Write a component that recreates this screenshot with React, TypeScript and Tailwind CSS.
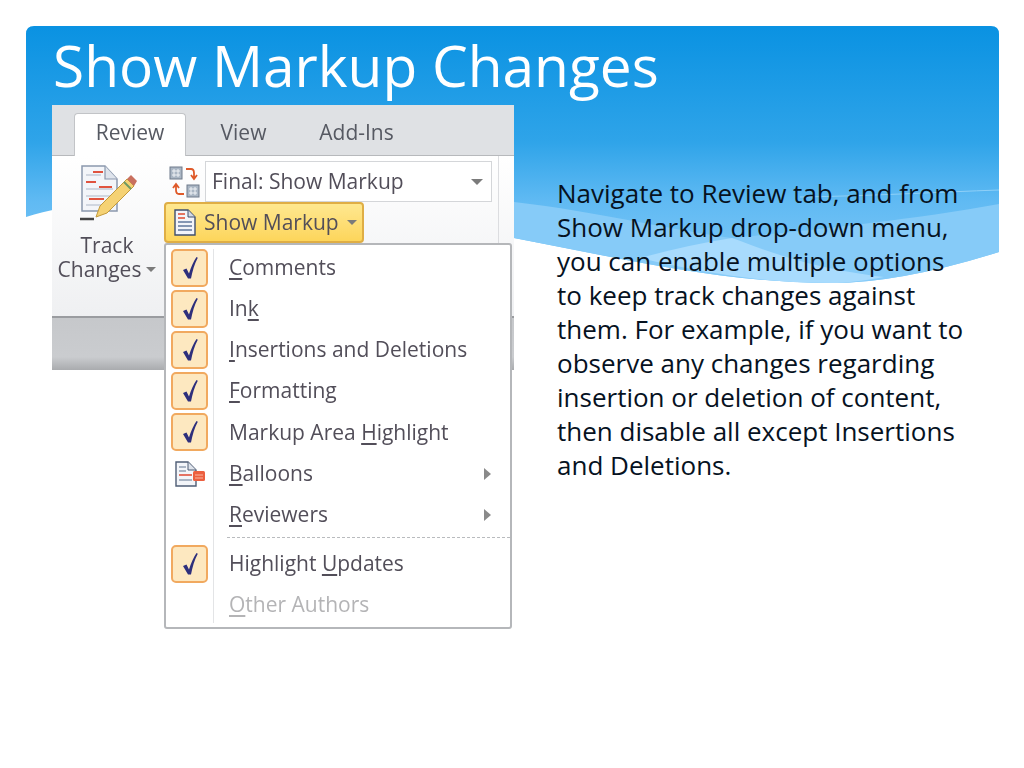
import React from "react";

function Banner() {
  return (
    <svg className="absolute left-0 top-0" width="1024" height="300" viewBox="0 0 1024 300">
      <defs>
        <linearGradient id="bg" x1="0" y1="26" x2="0" y2="284" gradientUnits="userSpaceOnUse">
          <stop offset="0" stopColor="#0a92e2" />
          <stop offset="0.45" stopColor="#2fa4e9" />
          <stop offset="0.68" stopColor="#60baf3" />
          <stop offset="1" stopColor="#84caf8" />
        </linearGradient>
      </defs>
      <path d="M26 217 L26 34 Q26 26 34 26 L991 26 Q999 26 999 34 L999 252 Q900 283 833 283 C720 283 620 258 514 238 C350 205 150 180 26 217 Z" fill="url(#bg)" />
      <path d="M514 202 C600 212 670 230 732 238 C790 232 900 222 999 204 L999 252 Q900 283 833 283 C720 283 620 258 514 238 Z" fill="#86cbf8" />
      <path d="M640 258 C670 250 700 243 732 238 C770 252 810 268 884 277 Q850 283 833 283 C760 283 700 272 640 258 Z" fill="#a8dbfd" />
      <path d="M800 197 C870 196 940 192 999 190" stroke="#8fd0f8" strokeWidth="1" fill="none" />
    </svg>
  );
}

function TrackIcon() {
  return (
    <svg width="60" height="62" viewBox="0 0 60 62">
      <path d="M3 3 H26 L38 16 V48 H3 Z" fill="#f3f5f9" stroke="#8b98ad" strokeWidth="1.5" />
      <path d="M26 3 V16 H38" fill="#dfe4ec" stroke="#8b98ad" strokeWidth="1.2" />
      <path d="M7 12 H22 M7 26 H34 M7 33 H34 M7 42 H30" stroke="#c5ccd8" strokeWidth="1.5" />
      <path d="M14 9 H24 M7 19 H17 M20 24 H33 M10 36 H25" stroke="#e0533f" strokeWidth="2" />
      <path d="M17 54 L21 43 L48 16 L55 23 L28 50 Z" fill="#f5d274" stroke="#c39a3b" strokeWidth="1" />
      <path d="M48 16 L52 12 L58 18 L55 23 Z" fill="#c9705f" />
      <path d="M45 19 L52 26" stroke="#6f9a62" strokeWidth="2" />
      <path d="M1 56 H15" stroke="#444" strokeWidth="2.5" />
    </svg>
  );
}

function CompareIcon() {
  return (
    <svg width="31" height="32" viewBox="0 0 31 32">
      <rect x="1" y="1" width="12" height="12" fill="#aab6c4" stroke="#6f7b8b" />
      <path d="M3 5 H11 M3 9 H11 M5 3 V11 M9 3 V11" stroke="#eef1f5" strokeWidth="1" />
      <rect x="18" y="19" width="12" height="12" fill="#aab6c4" stroke="#6f7b8b" />
      <path d="M20 23 H28 M20 27 H28 M22 21 V29 M26 21 V29" stroke="#eef1f5" strokeWidth="1" />
      <path d="M17 3 H22 Q25 3 25 7 V12 M22 9 L25 13 L28 9" stroke="#df5a2a" strokeWidth="1.8" fill="none" />
      <path d="M15 28 H10 Q7 28 7 24 V19 M4 22 L7 18 L10 22" stroke="#df5a2a" strokeWidth="1.8" fill="none" />
    </svg>
  );
}

function DocIcon() {
  return (
    <svg width="22" height="27" viewBox="0 0 22 27">
      <path d="M1 1 H14 L21 8 V26 H1 Z" fill="#f2f4f9" stroke="#3f4f6e" strokeWidth="1.4" />
      <path d="M14 1 V8 H21" fill="#d3dae6" stroke="#3f4f6e" />
      <path d="M4 5 H11 M4 9 H11" stroke="#e0492f" strokeWidth="1.6" />
      <path d="M4 13 H18 M4 17 H18 M4 21 H18" stroke="#8496b3" strokeWidth="1.8" />
    </svg>
  );
}

function BalloonIcon() {
  return (
    <svg width="32" height="28" viewBox="0 0 32 28">
      <path d="M2 2 H14 L22 10 V26 H2 Z" fill="#f3f5f9" stroke="#4f5d75" strokeWidth="1.4" />
      <path d="M14 2 V10 H22" fill="#dfe4ec" stroke="#4f5d75" />
      <path d="M5 7 H12 M5 11 H12 M5 20 H18" stroke="#93a0b3" strokeWidth="1.6" />
      <path d="M5 15 H18" stroke="#e0533f" strokeWidth="1.6" />
      <rect x="19" y="11" width="12" height="10" rx="1.5" fill="#ec5f3f" />
      <path d="M21 15 H29 M21 18 H29" stroke="#f9b7a3" strokeWidth="1" />
    </svg>
  );
}

function Check() {
  return (
    <div className="flex h-[38px] w-[37px] items-center justify-center rounded-[5px] border-2 border-[#f1a95f] bg-[#fde8c0]">
      <svg width="16" height="24" viewBox="0 0 16 24">
        <path d="M1 14 L4.5 12.5 L7 17.5 C9 11 11.5 5.5 14.5 1 L15.8 1.8 C12.5 8 10.5 15 9 22.5 L6 22.5 Z" fill="#2e2f7c" />
      </svg>
    </div>
  );
}

function Caret({ wide }: { wide?: boolean }) {
  return (
    <span
      className={
        wide
          ? "inline-block h-0 w-0 border-x-[6px] border-t-[6px] border-x-transparent border-t-[#7b7b7b]"
          : "inline-block h-0 w-0 border-x-[5px] border-t-[5px] border-x-transparent border-t-[#7b7b7b]"
      }
    />
  );
}

function Chevron() {
  return <span className="mr-[19px] ml-auto inline-block h-0 w-0 border-y-[6px] border-l-[7px] border-y-transparent border-l-[#8a8a8a]" />;
}

type Item = { before?: string; key?: string; after?: string; mark?: "check" | "balloon"; sub?: boolean; off?: boolean };

const top: Item[] = [
  { key: "C", after: "omments", mark: "check" },
  { before: "In", key: "k", mark: "check" },
  { key: "I", after: "nsertions and Deletions", mark: "check" },
  { key: "F", after: "ormatting", mark: "check" },
  { before: "Markup Area ", key: "H", after: "ighlight", mark: "check" },
  { key: "B", after: "alloons", mark: "balloon", sub: true },
  { key: "R", after: "eviewers", sub: true },
];
const bottom: Item[] = [
  { before: "Highlight ", key: "U", after: "pdates", mark: "check" },
  { key: "O", after: "ther Authors", off: true },
];

function Row({ item }: { item: Item }) {
  return (
    <div className="flex h-[41.2px] items-center">
      <div className="flex w-[49px] shrink-0 items-center justify-center pl-[2px] pr-[4px]">
        {item.mark === "check" && <Check />}
        {item.mark === "balloon" && <BalloonIcon />}
      </div>
      <div className={"pl-[14px] text-[21px] whitespace-pre " + (item.off ? "text-[#b4b4b6]" : "text-[#524e59]")}>
        {item.before}
        <span className="underline underline-offset-[3px]">{item.key}</span>
        {item.after}
      </div>
      {item.sub && <Chevron />}
    </div>
  );
}

function Ribbon() {
  return (
    <div className="relative h-[265px] w-[462px] font-['Open_Sans',sans-serif] blur-[0.5px]">
      <div className="flex h-[51px] items-end border-b border-[#b7b9bc] bg-[#dfe1e4] pl-[22px] text-[21px] text-[#565962]">
        <div className="-mb-px flex h-[43px] w-[112px] items-center justify-center rounded-t-[4px] border border-b-0 border-[#c2c4c7] bg-white pb-[4px]">Review</div>
        <div className="ml-[11px] flex h-[42px] w-[93px] items-center justify-center pb-[3px]">View</div>
        <div className="ml-[19px] flex h-[42px] w-[95px] items-center justify-center pb-[3px]">Add-Ins</div>
      </div>
      <div className="flex h-[160px] bg-gradient-to-b from-white to-[#eff0f2]">
        <div className="flex w-[110px] flex-col items-center pt-[7px] text-[21px] leading-[24px] text-[#524e59]">
          <div className="pl-[3px]"><TrackIcon /></div>
          <div className="mt-[8px]">Track</div>
          <div className="flex items-center gap-[5px] whitespace-nowrap">Changes <Caret /></div>
        </div>
        <div className="flex w-[336px] flex-col pt-[5px]">
          <div className="flex items-center">
            <div className="ml-[7px] w-[36px]"><CompareIcon /></div>
            <div className="flex h-[41px] w-[287px] items-center border border-[#d4d6d9] bg-white pl-[6px] pr-[8px] text-[21px] text-[#524e59]">
              Final: Show Markup
              <span className="ml-auto flex items-center"><Caret wide /></span>
            </div>
          </div>
          <div className="ml-[2px] flex h-[41px] w-[200px] items-center gap-[8px] rounded-[4px] border-2 border-[#dfae45] bg-gradient-to-b from-[#fee88f] to-[#fdd55a] pl-[8px] text-[21px] text-[#524e59]">
            <DocIcon /> Show Markup <Caret />
          </div>
        </div>
        <div className="h-[90px] w-px bg-[#dcdde0]" />
      </div>
      <div className="flex h-[54px] flex-col">
        <div className="h-[2px] bg-[#9a9ca0]" />
        <div className="flex-1 bg-gradient-to-b from-[#c6c8cb] via-[#cacccf] via-75% to-[#a9abae]" />
      </div>
      <div className="absolute left-[112px] top-[138px] w-[348px] rounded-[3px] border-2 border-[#b5b7ba] bg-white pt-[2px] pb-[1px]">
        <div className="absolute bottom-[4px] left-[47px] top-[4px] w-px bg-[#e3e4e6]" />
        {top.map((it, i) => <Row key={i} item={it} />)}
        <div className="mt-[2px] mb-[5px] ml-[61px] border-t border-dashed border-[#b9bbbe]" />
        {bottom.map((it, i) => <Row key={i} item={it} />)}
      </div>
    </div>
  );
}

export default function App() {
  return (
    <div className="relative h-[768px] w-[1024px] overflow-hidden bg-white">
      <Banner />
      <div className="relative pl-[52px] pt-[26px]">
        <h1 className="h-[79px] pl-[1px] font-['Open_Sans',sans-serif] text-[56.8px] leading-[79px] text-white">Show Markup Changes</h1>
        <div className="flex">
          <Ribbon />
          <p className="ml-[43px] mt-[71px] w-[412px] font-['Open_Sans',sans-serif] text-[26px] leading-[34px] text-[#06121f]">
            Navigate to Review tab, and from Show Markup drop-down menu, you can enable multiple options to keep track changes against them. For example, if you want to observe any changes regarding insertion or deletion of content, then disable all except Insertions and Deletions.
          </p>
        </div>
      </div>
    </div>
  );
}
